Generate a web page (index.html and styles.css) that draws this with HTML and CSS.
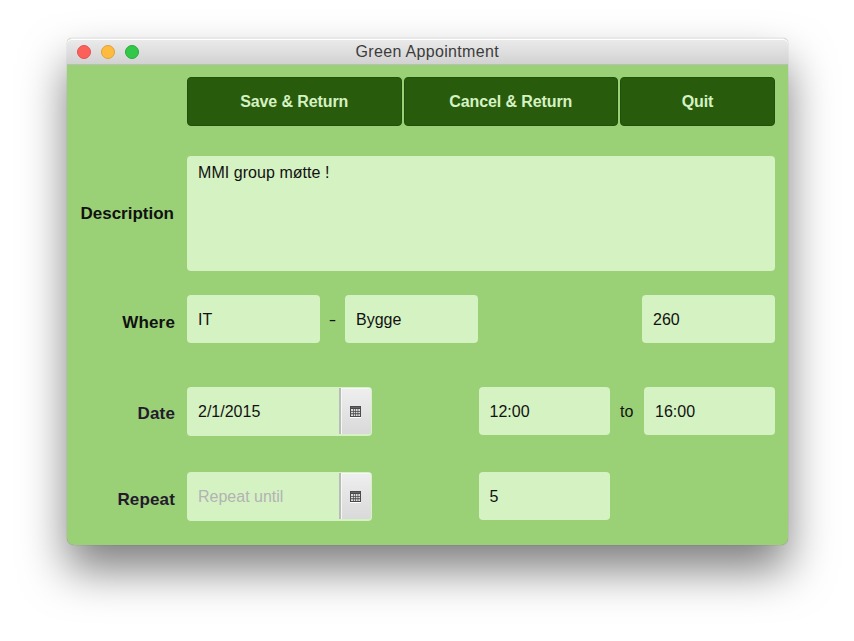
FILE: index.html
```html
<!DOCTYPE html>
<html lang="en">
<head>
<meta charset="utf-8">
<title>Green Appointment</title>
<link rel="stylesheet" href="styles.css">
</head>
<body>
<svg width="0" height="0" class="defs" aria-hidden="true">
  <symbol id="calendar" viewBox="0 0 11 12">
    <rect x="0" y="11" width="11" height="1" fill="#fff"/>
    <rect x="0" y="0" width="11" height="11" fill="#4a4a4a"/>
    <path d="M1 1.5h9" stroke="#777" stroke-width=".6"/>
    <path d="M1 3h2v2H1zM3.7 3h1.6v2H3.7zM6 3h1.6v2H6zM8.3 3H10v2H8.3zM1 5.7h2v1.6H1zM3.7 5.7h1.6v1.6H3.7zM6 5.7h1.6v1.6H6zM8.3 5.7H10v1.6H8.3zM1 8.2h2V10H1zM3.7 8.2h1.6V10H3.7zM6 8.2h1.6V10H6zM8.3 8.2H10V10H8.3z" fill="#dcdcdc"/>
  </symbol>
</svg>
<main class="window">
  <header class="titlebar">
    <div class="lights"><i class="light red"></i><i class="light yellow"></i><i class="light green"></i></div>
    <h1 class="title">Green Appointment</h1>
  </header>
  <div class="content">
    <nav class="toolbar">
      <button class="action">Save &amp; Return</button>
      <button class="action">Cancel &amp; Return</button>
      <button class="action">Quit</button>
    </nav>
    <section class="row description">
      <span class="label">Description</span>
      <div class="field area">MMI group møtte !</div>
    </section>
    <section class="row where">
      <span class="label">Where</span>
      <div class="field place">IT</div>
      <span class="dash">-</span>
      <div class="field place">Bygge</div>
      <div class="field place push">260</div>
    </section>
    <section class="row date">
      <span class="label">Date</span>
      <div class="field picker"><span class="value">2/1/2015</span><button class="pick" aria-label="Pick date"><svg><use href="#calendar"/></svg></button></div>
      <div class="field time first">12:00</div>
      <span class="to">to</span>
      <div class="field time">16:00</div>
    </section>
    <section class="row repeat">
      <span class="label">Repeat</span>
      <div class="field picker"><span class="value placeholder">Repeat until</span><button class="pick" aria-label="Pick end date"><svg><use href="#calendar"/></svg></button></div>
      <div class="field time first">5</div>
    </section>
  </div>
</main>
</body>
</html>
```
FILE: styles.css
```css
* { box-sizing: border-box; }
body {
  margin: 0;
  width: 854px;
  height: 641px;
  overflow: hidden;
  background: #fff;
  padding: 38px 0 0 67px;
  font: 16px/20px "Liberation Sans", Arial, sans-serif;
  color: #111;
}
.defs { display: block; }
.window {
  width: 720.5px;
  height: 507px;
  border-radius: 5px 5px 7px 7px;
  background: #9ad176;
  box-shadow: 0 0 1px rgba(0,0,0,.35), 0 25px 45px rgba(0,0,0,.5);
}
.titlebar {
  height: 27px;
  display: grid;
  grid-template-columns: 110px 1fr 110px;
  align-items: center;
  border-radius: 5px 5px 0 0;
  border-top: 1px solid #e9e9e9;
  border-bottom: 1px solid #b9bfb5;
  background: linear-gradient(#ebebeb, #d2d2d2);
  box-shadow: inset 0 1px #fff;
}
.lights { display: flex; gap: 10px; padding-left: 10px; }
.light { width: 14px; height: 14px; border-radius: 50%; border: 1px solid; }
.red { background: #fc605b; border-color: #e7504b; }
.yellow { background: #fdbc40; border-color: #e2a134; }
.green { background: #34c84a; border-color: #27ac35; }
.title { margin: 1px 0 0; font-size: 16px; font-weight: 400; color: #3c3c3c; text-align: center; letter-spacing: .32px; }
.content { padding: 12px 12.5px 0 0; }
.toolbar { display: grid; grid-template-columns: 214.5px 213.5px 155px; gap: 2.5px; margin-left: 120px; }
.action {
  height: 49px;
  padding: 0;
  border: 1px solid #21500a;
  border-radius: 4px;
  background: #295b0c;
  color: #d5f2c3;
  font: bold 16px/20px "Liberation Sans", Arial, sans-serif;
  letter-spacing: -.1px;
}
.row { display: flex; align-items: flex-start; }
.description { margin-top: 30px; }
.where { margin-top: 24px; }
.date { margin-top: 43.5px; }
.repeat { margin-top: 36px; }
.label {
  width: 108px;
  margin-right: 12px;
  flex: none;
  text-align: right;
  font-weight: bold;
  font-size: 17px;
  margin-top: 18px;
  letter-spacing: .15px;
}
.description .label { margin-top: 48px; padding-right: 1px; letter-spacing: 0; }
.date .label { margin-top: 17px; }
.date .label, .repeat .label { color: #241a2e; }
.field {
  flex: none;
  height: 48px;
  padding: 15px 11px 0;
  border-radius: 4px;
  background: #d5f2c3;
}
.area { flex: 1; height: 115px; padding-top: 7px; letter-spacing: .05px; }
.place { width: 133px; }
.dash { width: 25px; text-align: center; margin-top: 15px; transform: scaleX(1.4); }
.push { margin-left: auto; }
.picker { display: flex; width: 185px; height: 49px; padding: 1px 1px 2px 11px; }
.value { flex: 1; padding-top: 14px; }
.placeholder { color: #b3b3b3; }
.pick {
  width: 32px;
  padding: 0;
  display: grid;
  place-items: center;
  border: 0;
  border-left: 2px solid #b9bdb7;
  border-radius: 0 2px 2px 0;
  background: linear-gradient(#efefef, #d9d9d9);
  box-shadow: inset 1px 1px #f7f7f7;
}
.pick svg { width: 11px; height: 12px; display: block; margin: 2px 1px 0 0; }
.time { width: 131px; }
.first { margin-left: 106.5px; }
.to { width: 34.5px; text-align: center; margin-top: 15px; }
```
